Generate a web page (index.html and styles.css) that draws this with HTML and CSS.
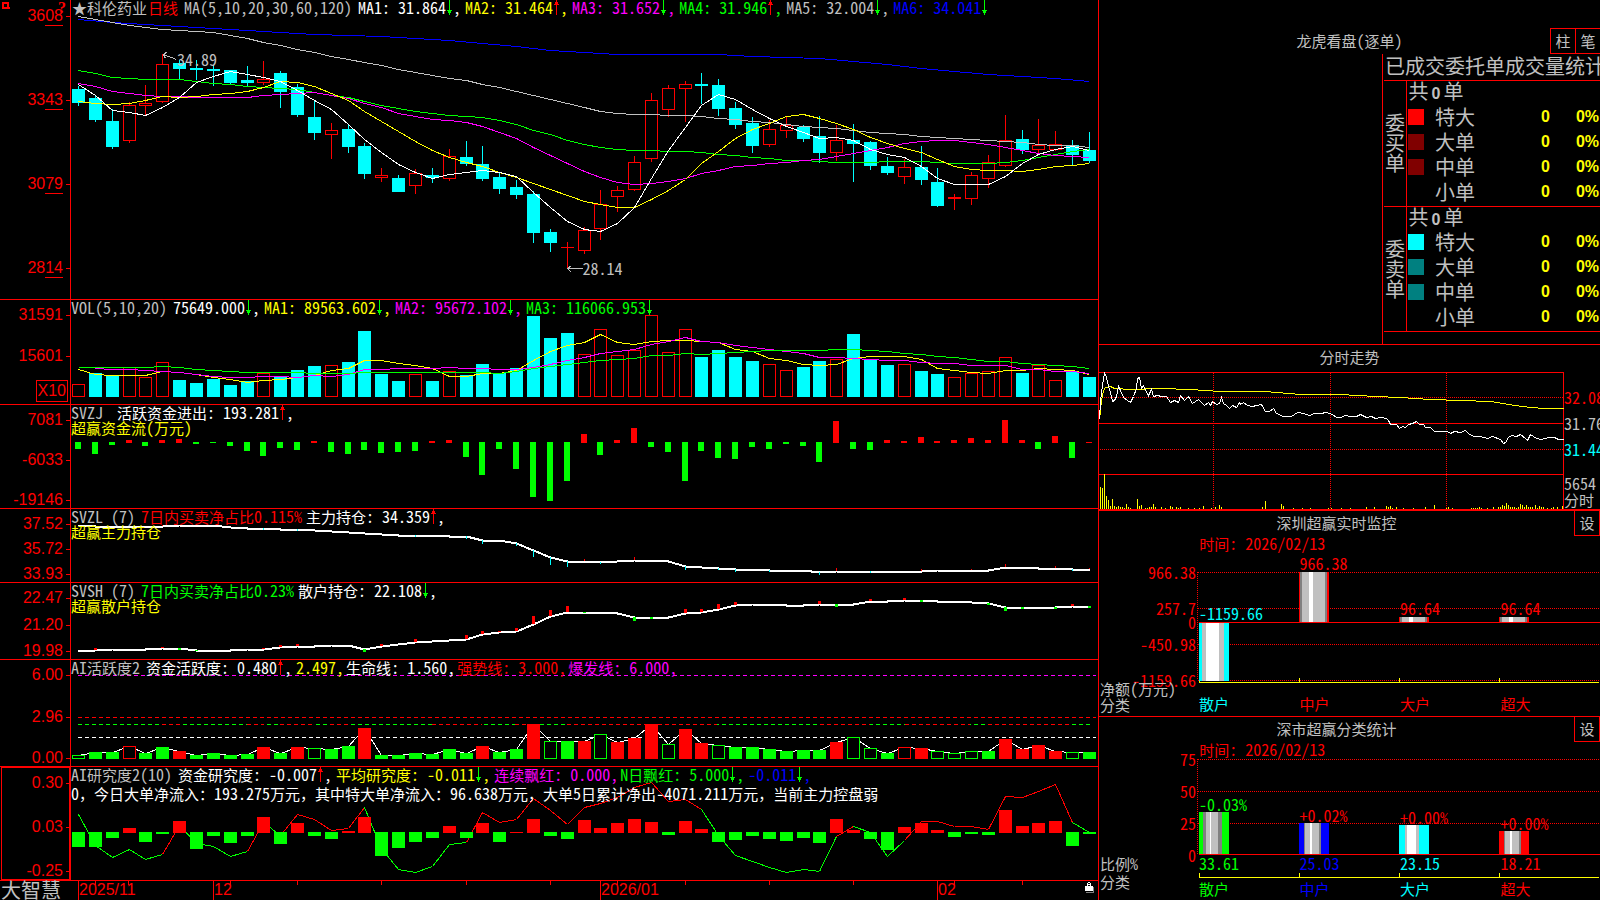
FILE: index.html
```html
<!DOCTYPE html>
<html lang="zh-CN">
<head>
<meta charset="utf-8">
<title>科伦药业 日线</title>
<link rel="stylesheet" href="styles.css">
</head>
<body>
<svg class="defs" aria-hidden="true">
  <symbol id="down" viewBox="0 0 7 15"><path d="M3 0h1v15h-1zM1 10h5v1h-5zM2 11h3v2h-3z"/></symbol>
  <symbol id="up" viewBox="0 0 7 15"><path d="M3 0h1v15h-1zM1 4h5v1h-5zM2 2h3v2h-3z"/></symbol>
</svg>
<div class="app">
<main class="charts">

<section class="panel">
  <div class="axis axis-price">
    <svg class="pin" viewBox="0 0 8 8"><path d="M1 1h5v5h-5zM6 6h1v1" fill="none" stroke="#f00" stroke-width="2"/></svg>
    <button class="help" aria-label="帮助">?</button>
    <span class="lab">36<u>08</u></span><span class="lab">33<u>43</u></span><span class="lab">30<u>79</u></span><span class="lab">28<u>14</u></span>
  </div>
  <div class="plot">
    <svg id="price" class="fig" viewBox="71 0 1027 299" preserveAspectRatio="none"></svg>
    <div class="head">
      <p><span class="gray name">★科伦药业</span><span class="red period">日线</span><span class="n gray ttl">MA(5,10,20,30,60,120)</span>
      <span class="n white it">MA1: 31.864<svg class="arw dn"><use href="#down"/></svg>,</span>
      <span class="n yellow it">MA2: 31.464<svg class="arw up"><use href="#up"/></svg>,</span>
      <span class="n magenta it">MA3: 31.652<svg class="arw dn"><use href="#down"/></svg>,</span>
      <span class="n green it">MA4: 31.946<svg class="arw up"><use href="#up"/></svg>,</span>
      <span class="n gray it">MA5: 32.004<svg class="arw dn"><use href="#down"/></svg>,</span>
      <span class="n blue it">MA6: 34.041<svg class="arw dn"><use href="#down"/></svg></span></p>
    </div>
    <span class="n mark mark-high">34.89</span>
    <span class="n mark mark-low">28.14</span>
  </div>
</section>

<section class="panel">
  <div class="axis axis-vol"><span class="lab">31591</span><span class="lab">15601</span><span class="unit">X10</span></div>
  <div class="plot">
    <svg id="vol" class="fig" viewBox="71 300 1027 104" preserveAspectRatio="none"></svg>
    <div class="head"><p><span class="n gray ttl">VOL(5,10,20)</span>
      <span class="n white it">75649.000<svg class="arw dn"><use href="#down"/></svg>,</span>
      <span class="n yellow it">MA1: 89563.602<svg class="arw dn"><use href="#down"/></svg>,</span>
      <span class="n magenta it">MA2: 95672.102<svg class="arw dn"><use href="#down"/></svg>,</span>
      <span class="n green it">MA3: 116066.953<svg class="arw dn"><use href="#down"/></svg></span></p></div>
  </div>
</section>

<section class="panel">
  <div class="axis axis-flow"><span class="lab">7081</span><span class="lab">-6033</span><span class="lab">-19146</span></div>
  <div class="plot">
    <svg id="flow" class="fig" viewBox="71 405 1027 103" preserveAspectRatio="none"></svg>
    <div class="head"><p><span class="n gray ttl wide">SVZJ</span><span class="white it">活跃资金进出<span class="n">: 193.281<svg class="arw up"><use href="#up"/></svg>,</span></span></p>
    <p class="yellow">超赢资金流<span class="n">(</span>万元<span class="n">)</span></p></div>
  </div>
</section>

<section class="panel">
  <div class="axis axis-main"><span class="lab">37.52</span><span class="lab">35.72</span><span class="lab">33.93</span></div>
  <div class="plot">
    <svg id="main" class="fig" viewBox="71 509 1027 73" preserveAspectRatio="none"></svg>
    <div class="head"><p><span class="n gray ttl">SVZL (7)</span><span class="red it"><span class="n">7</span>日内买卖净占比<span class="n">0.115%</span></span><span class="white it">主力持仓<span class="n">: 34.359<svg class="arw up"><use href="#up"/></svg>,</span></span></p>
    <p class="yellow">超赢主力持仓</p></div>
  </div>
</section>

<section class="panel">
  <div class="axis axis-retail"><span class="lab">22.47</span><span class="lab">21.20</span><span class="lab">19.98</span></div>
  <div class="plot">
    <svg id="retail" class="fig" viewBox="71 583 1027 76" preserveAspectRatio="none"></svg>
    <div class="head"><p><span class="n gray ttl">SVSH (7)</span><span class="green it"><span class="n">7</span>日内买卖净占比<span class="n">0.23%</span></span><span class="white it">散户持仓<span class="n">: 22.108<svg class="arw dn"><use href="#down"/></svg>,</span></span></p>
    <p class="yellow">超赢散户持仓</p></div>
  </div>
</section>

<section class="panel">
  <div class="axis axis-active"><span class="lab">6.00</span><span class="lab">2.96</span><span class="lab">0.00</span></div>
  <div class="plot">
    <svg id="active" class="fig" viewBox="71 660 1027 106" preserveAspectRatio="none"></svg>
    <div class="head"><p><span class="gray ttl"><span class="n">AI</span>活跃度<span class="n">2</span></span><span class="white it">资金活跃度<span class="n">: 0.480<svg class="arw up"><use href="#up"/></svg>,</span></span><span class="n yellow it tight">2.497,</span><span class="white it tight">生命线<span class="n">: 1.560,</span></span><span class="red it tight">强势线<span class="n">: 3.000,</span></span><span class="magenta it">爆发线<span class="n">: 6.000,</span></span></p></div>
  </div>
</section>

<section class="panel">
  <div class="axis axis-study"><span class="lab">0.30</span><span class="lab">0.03</span><span class="lab">-0.25</span></div>
  <div class="plot">
    <svg id="study" class="fig" viewBox="71 767 1027 113" preserveAspectRatio="none"></svg>
    <div class="head"><p><span class="gray ttl"><span class="n">AI</span>研究度<span class="n">2(10)</span></span><span class="white it">资金研究度<span class="n">: -0.007<svg class="arw up"><use href="#up"/></svg>,</span></span><span class="yellow it">平均研究度<span class="n">: -0.011<svg class="arw dn"><use href="#down"/></svg>,</span></span><span class="magenta it tight">连续飘红<span class="n">: 0.000,</span></span><span class="green it"><span class="n">N</span>日飘红<span class="n">: 5.000<svg class="arw dn"><use href="#down"/></svg>,</span></span><span class="n blue it">-0.011<svg class="arw dn"><use href="#down"/></svg>,</span></p>
    <p class="note white"><span class="n">0</span>，今日大单净流入：<span class="n">193.275</span>万元，其中特大单净流入：<span class="n">96.638</span>万元，大单<span class="n">5</span>日累计净出<span class="n">-4071.211</span>万元，当前主力控盘弱</p></div>
  </div>
</section>

<footer class="dates">
  <span class="brand">大智慧</span>
  <div class="timeline">
    <svg id="ticks" class="fig" viewBox="70 881 1028 19" preserveAspectRatio="none"></svg>
    <time class="d1">2025/11</time><time class="d2">12</time><time class="d3">2026/01</time><time class="d4">02</time>
    <svg class="lock" viewBox="0 0 10 11"><path d="M9 5v6h-8v-1h7v-5z" fill="#808080"/><path d="M0 4h8v5h-8zM2 1h1v3h-1zM5 1h1v3h-1zM3 0h2v1h-2zM3 2h2v1h-2z" fill="#fff"/></svg>
  </div>
</footer>
</main>

<aside class="side">
<section class="orders">
  <header class="orders-top"><h2>龙虎看盘<span class="n">(</span>逐单<span class="n">)</span></h2><nav><button>柱</button><button>笔</button></nav></header>
  <div class="book">
    <h3>已成交委托单成交量统计</h3>
    <table>
      <colgroup><col class="c-side"><col class="c-sw"><col class="c-kind"><col class="c-num"><col class="c-pct"></colgroup>
      <tbody>
        <tr><th rowspan="5" scope="rowgroup">委买单</th><td colspan="4" class="sum">共<b>0</b>单</td></tr>
        <tr><td class="sw"><i class="box s-red"></i></td><td class="kind">特大</td><td class="num">0</td><td class="num pct">0%</td></tr>
        <tr><td class="sw"><i class="box s-maroon"></i></td><td class="kind">大单</td><td class="num">0</td><td class="num pct">0%</td></tr>
        <tr><td class="sw"><i class="box s-maroon"></i></td><td class="kind">中单</td><td class="num">0</td><td class="num pct">0%</td></tr>
        <tr><td class="sw"></td><td class="kind">小单</td><td class="num">0</td><td class="num pct">0%</td></tr>
      </tbody>
      <tbody>
        <tr><th rowspan="5" scope="rowgroup">委卖单</th><td colspan="4" class="sum">共<b>0</b>单</td></tr>
        <tr><td class="sw"><i class="box s-cyan"></i></td><td class="kind">特大</td><td class="num">0</td><td class="num pct">0%</td></tr>
        <tr><td class="sw"><i class="box s-teal"></i></td><td class="kind">大单</td><td class="num">0</td><td class="num pct">0%</td></tr>
        <tr><td class="sw"><i class="box s-teal"></i></td><td class="kind">中单</td><td class="num">0</td><td class="num pct">0%</td></tr>
        <tr><td class="sw"></td><td class="kind">小单</td><td class="num">0</td><td class="num pct">0%</td></tr>
      </tbody>
    </table>
  </div>
</section>

<section class="intraday">
  <h2>分时走势</h2>
  <div class="intra-body">
    <svg id="intra" class="fig" viewBox="1099 372 465 137" preserveAspectRatio="none"></svg>
    <ol class="n intra-labels"><li class="red">32.08</li><li class="gray">31.76</li><li class="cyan">31.44</li><li class="gray vol">5654</li><li class="gray zh">分时</li></ol>
  </div>
</section>

<section class="stat stat-net">
  <header><h2>深圳超赢实时监控</h2><button>设</button></header>
  <p class="when">时间<span class="n">: 2026/02/13</span></p>
  <div class="stat-body">
    <div class="ylab"><span class="n">966.38</span><span class="n">257.7</span><span class="n">0</span><span class="n">-450.98</span><span class="n">-1159.66</span><em>净额<span class="n">(</span>万元<span class="n">)</span></em><em>分类</em></div>
    <div class="bars">
      <svg id="net" class="fig" viewBox="1197 551 403 132" preserveAspectRatio="none"></svg>
      <ul class="n vals"><li class="cyan" style="top:55px">-1159.66</li><li class="red" style="top:5px">966.38</li><li class="red" style="top:50px">96.64</li><li class="red" style="top:50px">96.64</li></ul>
      <ul class="cats"><li class="cyan">散户</li><li class="red">中户</li><li class="red">大户</li><li class="red">超大</li></ul>
    </div>
  </div>
</section>

<section class="stat stat-share">
  <header><h2>深市超赢分类统计</h2><button>设</button></header>
  <p class="when">时间<span class="n">: 2026/02/13</span></p>
  <div class="stat-body">
    <div class="ylab"><span class="n">75</span><span class="n">50</span><span class="n">25</span><span class="n">0</span><em>比例<span class="n">%</span></em><em>分类</em></div>
    <div class="bars">
      <svg id="share" class="fig" viewBox="1197 758 403 124" preserveAspectRatio="none"></svg>
      <ul class="n vals"><li class="green" style="top:40px">-0.03%</li><li class="red" style="top:51px">+0.02%</li><li class="red" style="top:53px">+0.00%</li><li class="red" style="top:59px">+0.00%</li></ul>
      <ul class="n vals low"><li class="green">33.61</li><li class="blue">25.03</li><li class="cyan">23.15</li><li class="red">18.21</li></ul>
      <ul class="cats"><li class="green">散户</li><li class="blue">中户</li><li class="cyan">大户</li><li class="red">超大</li></ul>
    </div>
  </div>
</section>
</aside>
</div>
<script src="charts.js"></script>
</body>
</html>
```

FILE: styles.css
```css
* { box-sizing: border-box; }
html, body { height: 100%; }
body {
  margin: 0; background: #000; color: #c0c0c0; overflow: hidden;
  font: 15px/15px "Noto Sans CJK SC", sans-serif;
}
h2, h3, p, ul, ol { margin: 0; padding: 0; font: inherit; list-style: none; }
em, i { font-style: normal; }
button { margin: 0; padding: 0; background: #000; color: #c0c0c0; font: inherit; border: 1px solid #f00; }
.defs { display: none; }
.n { font-family: "Noto Sans Mono CJK SC", "Liberation Mono", monospace; font-size: 16px; line-height: 15px; }
.gray { color: #c0c0c0; } .white { color: #fff; } .yellow { color: #ff0; } .magenta { color: #f0f; }
.green { color: #0f0; } .blue { color: #00f; } .red { color: #f00; } .cyan { color: #0ff; }

.app { display: grid; grid-template-columns: 1099fr 501fr; grid-template-rows: minmax(0, 1fr); height: 100vh; }
.charts {
  display: grid; border-right: 1px solid #f00; min-width: 0;
  grid-template-rows: 300fr 105fr 104fr 74fr 77fr 107fr 114fr 19fr;
}
.panel { display: grid; grid-template-columns: 71px minmax(0, 1fr); grid-template-rows: minmax(0, 1fr); border-bottom: 1px solid #f00; min-height: 0; }
.fig { display: block; width: 100%; height: 100%; shape-rendering: crispEdges; }
.plot { position: relative; min-width: 0; min-height: 0; }
.plot .fig { position: absolute; inset: 0; }
.head { position: relative; white-space: nowrap; }
.head p { display: flex; align-items: baseline; height: 15px; line-height: 15px; }
.head .ttl { margin-right: 6px; }
.head .ttl.wide { margin-right: 14px; }
.head .it { margin-right: 4px; }
.head .it.tight { margin-right: 2px; }
.head .name { margin-left: 1px; }
.head .period { margin: 0 6px 0 1px; }
.head .note { display: block; margin-top: 4px; }
.arw { width: 7px; height: 15px; vertical-align: top; shape-rendering: crispEdges; }
.dn { fill: #0f0; } .up { fill: #f00; }
.mark { position: absolute; }
.mark-high { left: 106px; top: 52px; }
.mark-low { left: 49.8%; top: 261px; }

.axis {
  position: relative; display: flex; flex-direction: column; justify-content: space-between; align-items: flex-end;
  border-right: 1px solid #f00; padding-right: 7px; color: #f00; min-height: 0;
  font: 16px/16px "Liberation Sans", Arial, sans-serif;
}
.lab { position: relative; }
.lab::after { content: ""; position: absolute; right: -7px; top: 8px; width: 4px; height: 1px; background: #f00; }
.lab u { text-decoration: none; border-bottom: 1px solid #f00; padding-bottom: 1px; }
.axis-price { padding-top: 8px; padding-bottom: 23px; }
.axis-vol { padding-top: 7px; padding-bottom: 2px; justify-content: flex-start; gap: 25px; }
.axis-flow { padding-top: 7px; }
.axis-main { padding-top: 7px; }
.axis-retail { padding-top: 7px; }
.axis-active { padding-top: 7px; }
.axis-study { padding-top: 7px; border: 1px solid #f00; border-right-width: 2px; margin-left: 1px; padding-right: 6px; }
.unit { border: 1px solid #f00; line-height: 20px; padding: 0 1px; margin: -9px -5px 0 0; }
.pin { position: absolute; left: 2px; top: 2px; width: 8px; height: 8px; }
.help { position: absolute; right: 4px; top: 0; border: 0; background: none; color: #f00; font: bold 16px/16px "Liberation Serif", serif; }

.dates { display: grid; grid-template-columns: 70px minmax(0, 1fr); min-height: 0; }
.brand { font-size: 20px; line-height: 17px; padding-left: 1px; white-space: nowrap; }
.timeline { position: relative; display: grid; grid-template-columns: 9fr 135fr 387fr 337fr 160fr; color: #f00; font: 16px/18px "Liberation Sans", Arial, sans-serif; }
.timeline .fig { position: absolute; inset: 0; }
.timeline time { position: relative; }
.d1 { grid-column: 2; }
.lock { position: absolute; right: 3px; top: 1px; width: 10px; height: 11px; shape-rendering: crispEdges; }

.side { display: grid; grid-template-rows: 345fr 166fr 206fr 183fr; min-width: 0; overflow: hidden; }
.orders { border-bottom: 1px solid #f00; display: flex; flex-direction: column; min-height: 0; }
.orders-top { display: grid; grid-template-columns: 1fr auto 1fr; padding-top: 28px; }
.orders-top h2 { grid-column: 2; line-height: 26px; }
.orders-top nav { justify-self: end; display: flex; }
.orders-top button { width: 26px; height: 26px; margin-right: -1px; line-height: 22px; }
.book { flex: 1; margin-left: auto; width: 218px; border-left: 1px solid #f00; overflow: hidden; }
.book h3 { font-size: 20px; line-height: 24px; padding: 0 0 2px 1px; white-space: nowrap; border-bottom: 1px solid #f00; margin-left: 1px; }
.book table { width: 216px; margin-left: 1px; border-collapse: collapse; table-layout: fixed; font-size: 20px; line-height: 21px; }
.book tbody { border-bottom: 1px solid #f00; }
.book td, .book th { padding: 0; height: 25px; font-weight: 400; vertical-align: top; }
.book th { border-right: 1px solid #f00; line-height: 20px; padding: 0 1px; vertical-align: middle; }
.c-side { width: 22px; }
.c-sw { width: 29px; }
.c-kind { width: 60px; }
.c-num { width: 55px; }
.book td.sum { padding-left: 2px; line-height: 20px; }
.sum b { font: bold 16px/16px "Liberation Sans", sans-serif; padding: 0 3px; }
.box { display: block; width: 16px; height: 16px; margin: 3px 0 0 1px; }
.s-red { background: #f00; } .s-maroon { background: #800000; } .s-cyan { background: #0ff; } .s-teal { background: #008080; }
.book .num { font: bold 16px/22px "Liberation Sans", sans-serif; color: #ff0; text-align: right; }
.book .pct { padding-right: 1px; }

.intraday { border-bottom: 2px solid #f00; display: flex; flex-direction: column; min-width: 0; min-height: 0; }
.intraday h2 { text-align: center; line-height: 23px; height: 27px; }
.intra-body { flex: 1; display: grid; grid-template-columns: minmax(0, 465fr) minmax(0, 36fr); grid-template-rows: minmax(0, 1fr); min-height: 0; }
.intra-labels { padding-top: 17px; }
.intra-labels li { line-height: 16px; margin-bottom: 10px; }
.intra-labels .vol { margin: 18px 0 1px; }
.intra-labels .zh { font-size: 15px; margin: 0; }

.stat { min-width: 0; min-height: 0; }
.stat-net { border-bottom: 1px solid #f00; }
.stat header { display: flex; height: 25px; }
.stat h2 { flex: 1; text-align: center; line-height: 23px; }
.stat header button { width: 26px; height: 25px; border-top: 0; line-height: 22px; }
.when { color: #f00; padding-left: 20%; line-height: 14px; height: 15px; }
.when .n { line-height: 14px; }
.stat-body { display: grid; grid-template-columns: 98fr 403fr; }
.ylab { display: flex; flex-direction: column; color: #f00; line-height: 14px; }
.ylab > .n { line-height: 14px; text-align: right; padding-right: 1px; }
.ylab em { color: #c0c0c0; line-height: 16px; padding-left: 1px; }
.ylab em .n { line-height: 14px; }
.stat-net .ylab { padding-top: 14px; }
.stat-net .ylab .n:nth-child(2), .stat-net .ylab .n:nth-child(5) { margin-top: 22px; }
.stat-net .ylab .n:nth-child(4) { margin-top: 8px; }
.stat-net em:nth-child(6) { margin-top: -6px; }
.stat-share .ylab { margin-top: -5px; }
.stat-share .ylab .n:nth-child(2), .stat-share .ylab .n:nth-child(3), .stat-share .ylab .n:nth-child(4) { margin-top: 18px; }
.stat-share em:nth-child(5) { margin-top: -6px; }
.stat-share em:nth-child(6) { margin-top: 2px; }
.bars { position: relative; min-width: 0; }
.stat-net .fig { height: 132px; }
.stat-share .fig { height: 124px; }
.vals { position: absolute; left: 2px; right: -1px; top: 0; display: grid; grid-template-columns: repeat(4, 1fr); line-height: 14px; }
.vals li { position: relative; }
.vals.low { top: 99px; }
.cats { display: grid; grid-template-columns: repeat(4, 1fr); margin: 0 -1px 0 2px; }
.stat-net .cats { padding-top: 13px; }
```

FILE: charts.js
```js
const NS = 'http://www.w3.org/2000/svg';
const STEP = 16.85, X0 = 78;
const RED = '#f00', CYAN = '#0ff', GREEN = '#0f0', YELLOW = '#ff0', WHITE = '#fff', GRAY = '#c0c0c0', PINK = '#f0f', BLUE = '#00f', DARK = '#808080';
const cx = i => Math.round(X0 + STEP * i);

function add(svg, tag, attrs) {
  const el = document.createElementNS(NS, tag);
  for (const k in attrs) el.setAttribute(k, attrs[k]);
  svg.appendChild(el);
  return el;
}
const get = id => document.getElementById(id);
const fill = (s, x, y, w, h, c) => add(s, 'rect', { x, y, width: w, height: h, fill: c });
const box = (s, x, y, w, h, c) => add(s, 'rect', { x: x + .5, y: y + .5, width: w - 1, height: Math.max(h - 1, 1), fill: 'none', stroke: c });
const poly = (s, pts, c, w = 1) => add(s, 'polyline', { points: pts.map(p => `${p[0] + .5},${p[1] + .5}`).join(' '), fill: 'none', stroke: c, 'stroke-width': w });
const series = (s, ys, c, w = 1, from = 0, every = 1) => poly(s, ys.map((y, k) => [cx(from + k * every), y]), c, w);
const hdash = (s, x1, x2, y, c, d) => add(s, 'line', { x1, x2, y1: y + .5, y2: y + .5, stroke: c, 'stroke-dasharray': d });
const vdash = (s, x, y1, y2, c, d) => add(s, 'line', { x1: x + .5, x2: x + .5, y1, y2, stroke: c, 'stroke-dasharray': d });

// Daily candles: high, body top, body bottom, low
const kind = 'CCCRRRCCCCCRCCCRCCRCRCRCCCCCCRRRRRRRRCCCCRRCCRCCCRCCRRRRCRRCC';
const candles = [
[86,89,103,106],[96,98,120,122],[109,121,147,149],[102,105,141,143],[85,103,106,115],[54,64,102,103],[60,63,69,79],[60,68,70,80],[65,69,71,86],[70,70,83,85],
[66,80,83,87],[61,79,83,85],[71,73,92,108],[84,87,115,117],[100,117,133,140],[123,130,135,159],[125,129,147,153],[143,146,174,179],[168,175,178,182],[175,178,192,192],
[169,173,186,194],[168,175,178,183],[149,156,179,181],[141,157,164,166],[146,164,179,181],[172,177,189,194],[180,187,195,199],[191,194,233,243],[229,232,243,252],[242,247,248,268],
[227,230,251,254],[190,204,229,240],[186,190,197,212],[156,162,190,191],[93,100,159,162],[85,88,110,117],[81,84,89,122],[73,84,86,104],[79,85,109,116],[102,108,125,129],
[117,123,146,153],[120,129,145,147],[116,125,131,138],[125,127,139,142],[116,136,153,163],[125,140,153,161],[124,140,144,182],[141,142,166,170],[157,166,173,175],[159,167,177,184],
[146,167,180,185],[168,182,206,207],[194,197,199,210],[172,175,199,205],[155,162,179,188],[115,140,166,167],[130,139,150,154],[119,145,150,154],[131,144,150,151],[140,145,155,165],[132,150,161,163]];
const price = get('price');
candles.forEach(([hi, t, b, lo], i) => {
  const x = cx(i), c = kind[i] === 'R' ? RED : CYAN;
  if (t > hi) fill(price, x, hi, 1, t - hi, c);
  if (lo > b) fill(price, x, b, 1, lo - b, c);
  if (kind[i] === 'R' && b - t > 2) box(price, x - 6, t, 13, b - t, c);
  else fill(price, x - 6, t, 13, b - t, c);
});
series(price, [19,22,24,26,28,30,32,34,35,36,38,40,43,46,50,52,54,54,54,54,56,57,58,61,64,68,71,74,76,78,81], BLUE, 1, 0, 2);
series(price, [16,19,22,25,27,29,30,31,32,35,38,42,45,49,52,56,59,62,65,69,72,75,78,80,84,87,91,95,99,103,107,111,113,114,114,115,115,116,118,119,121,122,124,126,127,128,130,132,133,134,136,137,138,139,140,141,142,144,145,145,147], GRAY);
series(price, [70,73,77,78,79,79,79,81,83,84,86,87,88,89,92,95,97,101,105,108,111,113,115,116,117,120,124,130,134,140,144,147,149,150,150,151,151,152,154,155,157,158,160,160,161,162,162,162,161,161,161,162,163,163,163,162,160,157,154,151,149], GREEN);
series(price, [83,86,91,93,95,96,96,97,97,97,97,95,94,93,92,95,98,103,107,113,116,119,120,122,126,132,138,147,155,163,171,177,182,184,183,181,178,173,170,166,165,163,162,160,159,156,153,150,147,143,141,140,140,142,144,147,150,153,155,156,157], PINK);
series(price, [101,103,104,103,100,96,97,96,94,93,91,87,81,82,86,93,100,111,121,131,141,150,157,162,166,172,177,183,189,195,201,204,207,207,199,190,179,163,151,138,129,123,116,114,118,123,129,137,143,148,152,159,166,169,170,170,171,169,166,165,163], YELLOW);
series(price, [84,95,110,112,115,107,97,82,76,71,74,77,81,90,100,109,124,139,152,164,172,178,174,172,170,172,176,192,207,221,229,231,223,207,178,150,127,105,94,99,109,118,126,132,138,137,140,149,154,157,166,178,184,184,184,176,163,154,149,146,150], WHITE);
poly(price, [[176, 59], [163, 54], [167, 51]], GRAY);
poly(price, [[163, 54], [165, 58]], GRAY);
poly(price, [[582, 268], [567, 268], [571, 265]], GRAY);
poly(price, [[567, 268], [571, 272]], GRAY);

// Volume
const vol = get('vol');
const vkind = 'RCCRRRCCCCCRCCCRCCCCRCRCCCCCCCRRRRRRRCCCCRRCCRCCCRCCRRRRCRRCC';
[384,373,376,367,377,362,380,383,379,385,381,373,377,370,366,365,362,331,374,381,374,381,371,375,364,373,368,316,338,333,354,329,355,350,315,352,329,357,350,357,361,364,370,367,361,359,334,360,365,364,371,374,377,373,371,357,373,365,380,371,377]
  .forEach((y, i) => (vkind[i] === 'R' ? box : fill)(vol, cx(i) - 6, y, 13, 397 - y, vkind[i] === 'R' ? RED : CYAN));
series(vol, [369,374,375,375,375,371,372,374,377,379,382,380,379,377,375,370,368,360,360,363,365,368,376,376,373,373,370,360,351,345,342,334,342,344,341,340,340,341,342,349,351,358,360,364,365,364,358,356,356,356,359,368,370,372,373,370,370,368,369,370,374], YELLOW);
series(vol, [368,369,369,370,371,372,374,376,377,377,376,376,377,375,376,374,369,369,368,368,368,367,368,368,369,369,367,364,360,357,353,351,349,344,341,337,341,342,345,347,349,351,353,357,357,358,359,360,360,362,363,363,365,365,365,369,369,371,371,373], PINK, 1, 1);
series(vol, [367,367,367,367,367,366,367,369,370,371,372,372,372,372,373,373,373,372,372,372,372,372,372,372,372,373,371,368,366,364,362,360,359,358,355,355,353,354,353,352,351,350,350,350,350,349,349,350,351,353,354,356,357,359,361,361,363,364,365,366,368], GREEN);

// Net active funds
const flow = get('flow');
[-7,-12,-3,3,-4,3,4,-2,-1,-4,-9,-14,-6,-8,2,-10,-12,-8,-11,-10,-9,2,3,-15,-33,-7,-27,-55,-59,-39,9,-13,3,15,-5,-10,-39,-9,-16,-17,-5,-7,-2,-4,-20,22,-7,-8,3,2,6,2,3,5,3,23,3,-7,7,-16,1]
  .forEach((v, i) => v < 0 ? fill(flow, cx(i) - 3, 442, 6, -v, GREEN) : fill(flow, cx(i) - 3, 443 - v, 6, v, RED));

// Main-force and retail holdings
function holding(id, ys, ticks, down, up, w) {
  const s = get(id);
  series(s, ys, WHITE, 2);
  for (const i in ticks) {
    const d = ticks[i], x = cx(+i) - (w >> 1);
    d > 0 ? fill(s, x, ys[i], w, d, down) : fill(s, x, ys[i] + d, w, -d, up);
  }
}
holding('main', [525,526,526,526,526,526,525,525,525,527,528,528,529,529,530,531,532,533,534,535,535,535,536,536,540,540,543,550,557,561,561,562,561,560,560,561,566,567,568,569,569,570,570,570,572,571,571,571,571,571,571,570,570,570,570,567,567,568,568,569,569],
  { 5: -1, 11: 2, 13: 2, 20: 2, 23: 3, 24: 4, 26: 3, 27: 7, 28: 8, 29: 6, 30: -2, 31: 2, 33: -3, 36: 4, 38: 2, 39: 3, 41: 2, 44: 3, 45: -3, 47: 2, 50: -2, 53: -1, 55: -3, 58: -2, 59: 2, 60: -1 }, CYAN, RED, 1);
holding('retail', [651,650,649,649,649,648,648,650,650,650,649,649,647,646,646,645,645,649,646,644,642,641,640,639,634,632,631,624,616,612,612,612,613,617,617,617,613,612,609,605,604,604,605,605,604,604,604,601,601,600,600,601,601,602,603,607,607,607,607,606,606],
  { 1: -2, 5: -1, 6: 2, 7: 1, 11: -1, 12: -2, 13: -2, 17: 3, 18: -2, 20: -3, 23: -4, 24: -3, 25: -1, 26: -3, 27: -8, 28: -6, 29: -6, 30: 1, 33: 4, 34: 2, 36: -4, 37: -3, 38: -5, 39: -3, 44: -3, 45: 3, 47: -2, 49: -2, 50: 2, 54: 2, 55: 4, 56: 2, 58: 2, 59: -2, 60: 2 }, GREEN, RED, 3);

// Activity: upper case is a solid bar, lower case an outlined one
const active = get('active');
const akind = 'gGGrGGRGGGGRGRgGGRGGGGGGRGGRgGRgRRRgRRgGGGGGGRggGrRgggGRRRRgG';
const atop = [755,752,752,746,753,747,751,755,753,755,754,747,753,747,748,749,746,728,755,755,753,754,749,753,746,752,749,724,741,741,741,734,742,738,724,744,729,743,745,747,747,749,751,750,750,742,737,748,753,747,748,751,753,751,751,739,749,745,751,752,752];
hdash(active, 78, 1096, 675, PINK, '4 3');
hdash(active, 78, 1096, 717, RED, '4 3');
hdash(active, 78, 1090, 724, GREEN, '4 3');
[[162, 180], [247, 264], [280, 313], [330, 348], [432, 482], [515, 535], [567, 717], [820, 870], [905, 970], [988, 1072]].forEach(([a, b]) => { fill(active, a, 724, b - a, 1, '#000'); hdash(active, a, b, 724, RED, '4 3'); });
hdash(active, 78, 1096, 737, WHITE, '4 3');
series(active, atop, WHITE);
atop.forEach((y, i) => {
  const k = akind[i], c = k.toUpperCase() === 'G' ? GREEN : RED;
  if (k === k.toUpperCase()) fill(active, cx(i) - 6, y, 13, 759 - y, c);
  else { fill(active, cx(i) - 6, y + 1, 13, 758 - y, '#000'); box(active, cx(i) - 6, y, 13, 759 - y, c); }
});

// Study
const study = get('study');
const line = [814,845,857,849,859,854,825,843,846,856,851,822,835,814,819,830,828,807,848,869,872,866,844,842,812,822,819,798,810,824,807,803,797,787,782,801,799,809,835,855,861,867,872,869,871,836,826,832,856,840,821,821,826,826,829,796,797,791,784,822,832];
const lkind = 'gggggrggggrgrrrrrggggggrrrrrrrrrrrrrrggggggggrgggrrrrrrrrrrg';
for (let i = 1; i < line.length; i++) poly(study, [[cx(i - 1), line[i - 1]], [cx(i), line[i]]], lkind[i - 1] === 'g' ? GREEN : RED);
[-15,-15,-6,5,-10,-2,12,-17,-4,-11,-4,16,-12,10,-4,-7,2,16,-24,-16,-10,-6,7,-6,10,-10,1,14,-4,-7,13,5,10,14,11,-3,12,4,-10,-8,-4,-7,-9,-6,-11,14,3,-7,-18,6,10,3,-5,-2,-3,23,7,10,12,-14,-2]
  .forEach((v, i) => v < 0 ? fill(study, cx(i) - 6, 832, 13, -v, GREEN) : fill(study, cx(i) - 6, 833 - v, 13, v, RED));

// Date ticks
const ticks = get('ticks');
[78, 213, 600, 937].forEach(x => fill(ticks, x, 881, 1, 19, RED));
[95, 128, 230, 297, 381, 466, 550, 617, 685, 769, 853, 954, 1022].forEach(x => fill(ticks, x, 881, 1, 4, RED));

// Intraday
const intra = get('intra');
[372, 423, 474].forEach(y => fill(intra, 1099, y, 465, 1, RED));
fill(intra, 1563, 372, 1, 137, RED);
[397, 449].forEach(y => hdash(intra, 1100, 1563, y, RED, '1 1'));
[1213, 1330, 1446].forEach(x => vdash(intra, x, 373, 509, RED, '1 1'));
poly(intra, [[1099,419],[1101,400],[1103,390],[1105,387],[1110,386],[1114,388],[1130,389],[1160,388],[1190,389],[1220,391],[1265,391],[1300,394],[1340,394],[1375,396],[1400,397],[1430,399],[1460,400],[1490,401],[1502,403],[1515,405],[1530,407],[1545,408],[1563,408]], YELLOW);
poly(intra, [[1099,419],[1100,400],[1102,385],[1104,372],[1106,377],[1108,386],[1110,392],[1112,401],[1114,400],[1116,396],[1118,386],[1120,390],[1123,397],[1127,400],[1130,402],[1133,396],[1136,388],[1137,378],[1139,377],[1141,388],[1143,385],[1145,390],[1148,395],[1151,389],[1153,396],[1157,395],[1161,396],[1166,396],[1170,402],[1174,400],[1178,402],[1180,395],[1184,400],[1188,396],[1192,403],[1198,399],[1204,405],[1208,402],[1210,405],[1212,401],[1216,404],[1219,403],[1221,397],[1223,403],[1226,405],[1229,408],[1232,405],[1236,407],[1239,402],[1240,404],[1243,402],[1247,405],[1252,406],[1256,405],[1261,404],[1265,411],[1269,411],[1273,408],[1276,413],[1283,416],[1291,416],[1297,412],[1303,413],[1309,415],[1314,413],[1320,413],[1326,412],[1332,414],[1336,417],[1340,417],[1345,415],[1350,416],[1356,416],[1360,414],[1366,417],[1371,416],[1375,418],[1380,417],[1386,418],[1388,420],[1390,424],[1396,424],[1399,428],[1402,426],[1405,427],[1408,424],[1412,423],[1416,421],[1419,424],[1423,424],[1425,427],[1430,427],[1434,431],[1447,431],[1450,433],[1454,431],[1460,432],[1465,430],[1468,433],[1473,436],[1480,436],[1487,438],[1492,436],[1500,439],[1503,443],[1505,442],[1508,437],[1511,435],[1516,436],[1520,434],[1525,438],[1527,440],[1530,434],[1536,438],[1541,439],[1548,437],[1554,437],[1558,439],[1563,439]], WHITE);
[[1100,22],[1102,21],[1104,35],[1106,13],[1108,9],[1110,3],[1112,10],[1114,3],[1116,2],[1118,3],[1120,2],[1122,2],[1124,1],[1126,5],[1128,2],[1130,1],[1137,10],[1139,3],[1141,4],[1145,1],[1147,1],[1149,2],[1151,2],[1153,5],[1155,2],[1161,2],[1165,1],[1170,3],[1172,2],[1176,2],[1178,1],[1180,2],[1188,1],[1194,1],[1199,1],[1203,3],[1211,1],[1215,2],[1219,4],[1221,2],[1262,2],[1265,8],[1281,5],[1283,3],[1293,1],[1302,1],[1310,1],[1328,1],[1331,1],[1341,1],[1350,1],[1366,2],[1374,2],[1386,3],[1388,2],[1390,3],[1392,1],[1396,2],[1403,1],[1413,1],[1425,2],[1434,4],[1446,1],[1448,2],[1452,1],[1471,1],[1473,1],[1475,1],[1477,1],[1479,2],[1481,1],[1487,1],[1493,2],[1498,2],[1500,2],[1502,4],[1504,3],[1506,6],[1508,4],[1510,2],[1512,2],[1514,2],[1516,1],[1518,2],[1520,5],[1522,4],[1524,2],[1526,4],[1528,2],[1530,2],[1532,2],[1535,4],[1537,1],[1539,3],[1541,2],[1543,2],[1547,1],[1551,1],[1553,2],[1557,2],[1562,3]]
  .forEach(([x, h]) => fill(intra, x, 509 - h, 1, h, YELLOW));

// Cylinder-shaded bars
function cylinder(s, x, y, h, bands) {
  bands.forEach(([c, w]) => { fill(s, x, y, w, h, c); x += w; });
}
function frame(s, dotted, top, bottom, base) {
  dotted.forEach(y => hdash(s, 1198, 1600, y, RED, '1 1'));
  vdash(s, 1197, top, bottom, RED, '1 1');
  fill(s, 1199, base, 400, 1, YELLOW);
  [1199, 1299, 1399, 1499].forEach(x => fill(s, x, base - 4, 1, 4, YELLOW));
}
const net = get('net');
const steel = [[RED, 1], [DARK, 2], [GRAY, 7], [WHITE, 4], [GRAY, 12], [DARK, 2], [RED, 2]];
frame(net, [572, 608, 644, 680], 572, 680, 682);
cylinder(net, 1199, 622, 59, [[CYAN, 3], [GRAY, 4], [WHITE, 13], [GRAY, 5], [CYAN, 5]]);
cylinder(net, 1299, 572, 50, steel);
cylinder(net, 1399, 617, 5, steel);
cylinder(net, 1499, 617, 5, steel);
fill(net, 1199, 622, 401, 1, RED);

const share = get('share');
frame(share, [760, 792, 824], 760, 855, 878);
cylinder(share, 1199, 813, 42, [[GREEN, 4], [DARK, 3], [GRAY, 4], [WHITE, 1], [GRAY, 7], [DARK, 4], [GREEN, 7]]);
const shade = c => [[c, 5], [DARK, 1], [GRAY, 5], [WHITE, 2], [GRAY, 7], [DARK, 2], [c, 8]];
cylinder(share, 1299, 824, 31, shade(BLUE));
cylinder(share, 1399, 826, 29, [[CYAN, 6], [GRAY, 2], [WHITE, 9], [GRAY, 3], [CYAN, 10]]);
cylinder(share, 1499, 832, 23, shade(RED));
fill(share, 1199, 855, 401, 1, RED);
```
